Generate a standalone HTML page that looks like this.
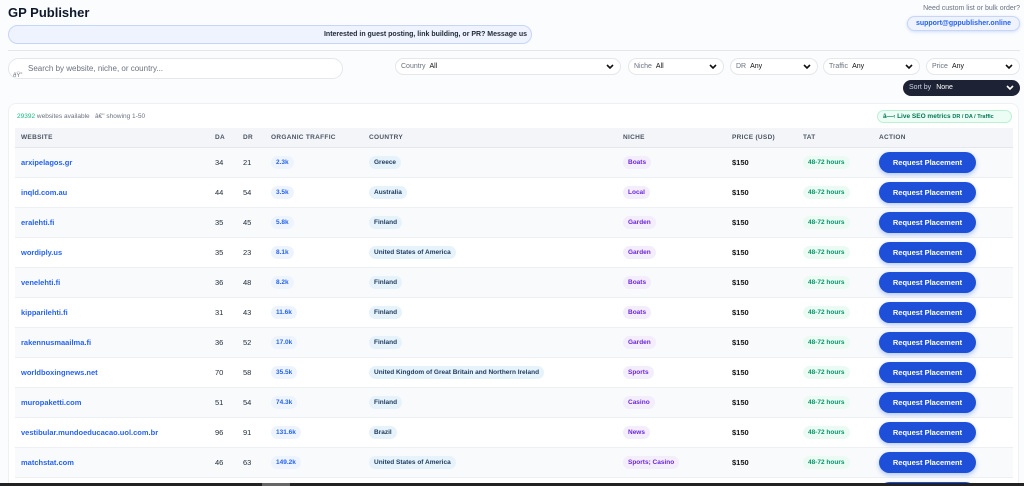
<!DOCTYPE html>
<html style="height:486px;overflow:hidden"><head><meta charset="utf-8"><style>
*{box-sizing:border-box;margin:0;padding:0}
body{width:1024px;height:486px;overflow:hidden;background:#fbfcfe;font-family:"Liberation Sans",sans-serif;position:relative;color:#111827}
.abs{position:absolute}
h1{position:absolute;left:8px;top:5px;font-size:13px;font-weight:bold;color:#0f172a}
.banner{left:8px;top:25px;width:524px;height:19px;border:1px solid #c7d6f7;background:#eef3fd;border-radius:10px;font-size:7px;font-weight:bold;text-align:right;padding-right:4px;line-height:18px;color:#1f2937}
.hr{left:8px;top:50px;width:1012px;height:1px;background:#e5e7eb}
.need{right:4px;top:5px;font-size:7px;color:#6b7280}
.sup{left:907px;top:16px;width:113px;height:15px;border:1px solid #c7d6f7;background:#eef3fd;border-radius:8px;font-size:7px;font-weight:bold;color:#2563eb;text-align:center;line-height:13px;box-shadow:0 1px 3px rgba(37,99,235,.2)}
.search{left:8px;top:58px;width:335px;height:21px;border:1px solid #e5e7eb;border-radius:11px;background:#fff;font-size:8px;color:#6b7280;padding-left:19px;line-height:20px}
.sel{top:58px;height:17px;border:1px solid #e5e7eb;border-radius:9px;background:#fff;font-size:7px;line-height:15px;padding-left:5px;color:#111}
.sel .l{color:#6b7280;margin-right:4px}
.sel svg{position:absolute;right:6px;top:5px}
.sort{left:903px;top:80px;width:117px;height:16px;background:#1e2235;border-radius:8px;color:#fff;font-size:7px;line-height:16px;padding-left:6px}
.sort svg{position:absolute;right:6px;top:5px}
.card{left:8px;top:103px;width:1011px;height:400px;background:#fff;border:1px solid #eef0f4;border-radius:8px}
.count{left:17px;top:113px;font-size:6.5px;color:#6b7280}
.live{left:877px;top:110px;width:135px;height:13px;border:1px solid #bbf0d5;background:#ecfdf5;border-radius:7px;font-size:6.5px;font-weight:bold;color:#047857;line-height:11px;padding-left:5px}
table{position:absolute;left:15px;top:128px;width:998px;border-collapse:collapse;font-size:7.5px}
th{height:19px;background:#f3f5f8;text-align:left;color:#4b5563;font-size:6.5px;letter-spacing:.3px;padding:0;border-bottom:1px solid #e5e7eb}
td{height:30px;padding:0;border-bottom:1px solid #edf0f3;color:#1f2937;vertical-align:middle}
tr:nth-child(even) td{background:#f8fafc}
.w{color:#2563eb;font-weight:bold;padding-left:6px}
.p{display:inline-block;padding:0 5px;height:13px;line-height:13px;border-radius:7px;font-weight:bold;font-size:6.5px;vertical-align:middle}
.t{background:#eef4fe;color:#2563eb}
.c{background:#e6f3fa;color:#1e3a5f}
.n{background:#f3edfc;color:#6d28d9}
.h{background:#ecfaf4;color:#059669}
.b{display:inline-block;width:97px;height:21px;border-radius:11px;background:#1d4fd8;color:#fff;font-weight:bold;text-align:center;line-height:21px;font-size:7.5px;box-shadow:0 2px 5px rgba(37,99,235,.35);vertical-align:middle}
.pr{font-weight:bold;color:#111}
.sb{left:0;top:483px;width:1024px;height:3px;background:#222;z-index:5}
</style></head><body>
<h1>GP Publisher</h1>
<div class="abs banner">Interested in guest posting, link building, or PR? Message us</div>
<div class="abs need">Need custom list or bulk order?</div>
<div class="abs sup">support@gppublisher.online</div>
<div class="abs hr"></div>
<div class="abs search">Search by website, niche, or country...</div>
<div class="abs" style="left:13px;top:73px;font-size:6px;color:#6b7280">ðŸ”</div>
<div class="abs sel" style="left:395px;width:226px"><span class="l">Country</span>All<svg width="8" height="6" viewBox="0 0 8 6"><path d="M1 1l3 3 3-3" stroke="#111" stroke-width="1.6" fill="none"/></svg></div>
<div class="abs sel" style="left:628px;width:96px"><span class="l">Niche</span>All<svg width="8" height="6" viewBox="0 0 8 6"><path d="M1 1l3 3 3-3" stroke="#111" stroke-width="1.6" fill="none"/></svg></div>
<div class="abs sel" style="left:730px;width:88px"><span class="l">DR</span>Any<svg width="8" height="6" viewBox="0 0 8 6"><path d="M1 1l3 3 3-3" stroke="#111" stroke-width="1.6" fill="none"/></svg></div>
<div class="abs sel" style="left:823px;width:97px"><span class="l">Traffic</span>Any<svg width="8" height="6" viewBox="0 0 8 6"><path d="M1 1l3 3 3-3" stroke="#111" stroke-width="1.6" fill="none"/></svg></div>
<div class="abs sel" style="left:926px;width:94px"><span class="l">Price</span>Any<svg width="8" height="6" viewBox="0 0 8 6"><path d="M1 1l3 3 3-3" stroke="#111" stroke-width="1.6" fill="none"/></svg></div>
<div class="abs sort"><span style="color:#cbd5e1;margin-right:5px">Sort by</span>None<svg width="8" height="6" viewBox="0 0 8 6"><path d="M1 1l3 3 3-3" stroke="#fff" stroke-width="1.6" fill="none"/></svg></div>
<div class="abs card"></div>
<div class="abs count"><b style="color:#10b981;font-weight:normal">29392</b> websites available &nbsp; â€" showing 1-50</div>
<div class="abs live">â—‹ Live SEO metrics <span style="font-size:5.5px">DR / DA / Traffic</span></div>
<table>
<colgroup><col style="width:200px"><col style="width:28px"><col style="width:28px"><col style="width:98px"><col style="width:254px"><col style="width:109px"><col style="width:71px"><col style="width:76px"><col></colgroup>
<tr><th style="padding-left:6px">WEBSITE</th><th>DA</th><th>DR</th><th>ORGANIC TRAFFIC</th><th>COUNTRY</th><th>NICHE</th><th>PRICE (USD)</th><th>TAT</th><th>ACTION</th></tr>
<tr><td class="w">arxipelagos.gr</td><td>34</td><td>21</td><td><span class="p t">2.3k</span></td><td><span class="p c">Greece</span></td><td><span class="p n">Boats</span></td><td class="pr">$150</td><td><span class="p h">48-72 hours</span></td><td><span class="b">Request Placement</span></td></tr>
<tr><td class="w">inqld.com.au</td><td>44</td><td>54</td><td><span class="p t">3.5k</span></td><td><span class="p c">Australia</span></td><td><span class="p n">Local</span></td><td class="pr">$150</td><td><span class="p h">48-72 hours</span></td><td><span class="b">Request Placement</span></td></tr>
<tr><td class="w">eralehti.fi</td><td>35</td><td>45</td><td><span class="p t">5.8k</span></td><td><span class="p c">Finland</span></td><td><span class="p n">Garden</span></td><td class="pr">$150</td><td><span class="p h">48-72 hours</span></td><td><span class="b">Request Placement</span></td></tr>
<tr><td class="w">wordiply.us</td><td>35</td><td>23</td><td><span class="p t">8.1k</span></td><td><span class="p c">United States of America</span></td><td><span class="p n">Garden</span></td><td class="pr">$150</td><td><span class="p h">48-72 hours</span></td><td><span class="b">Request Placement</span></td></tr>
<tr><td class="w">venelehti.fi</td><td>36</td><td>48</td><td><span class="p t">8.2k</span></td><td><span class="p c">Finland</span></td><td><span class="p n">Boats</span></td><td class="pr">$150</td><td><span class="p h">48-72 hours</span></td><td><span class="b">Request Placement</span></td></tr>
<tr><td class="w">kipparilehti.fi</td><td>31</td><td>43</td><td><span class="p t">11.6k</span></td><td><span class="p c">Finland</span></td><td><span class="p n">Boats</span></td><td class="pr">$150</td><td><span class="p h">48-72 hours</span></td><td><span class="b">Request Placement</span></td></tr>
<tr><td class="w">rakennusmaailma.fi</td><td>36</td><td>52</td><td><span class="p t">17.0k</span></td><td><span class="p c">Finland</span></td><td><span class="p n">Garden</span></td><td class="pr">$150</td><td><span class="p h">48-72 hours</span></td><td><span class="b">Request Placement</span></td></tr>
<tr><td class="w">worldboxingnews.net</td><td>70</td><td>58</td><td><span class="p t">35.5k</span></td><td><span class="p c">United Kingdom of Great Britain and Northern Ireland</span></td><td><span class="p n">Sports</span></td><td class="pr">$150</td><td><span class="p h">48-72 hours</span></td><td><span class="b">Request Placement</span></td></tr>
<tr><td class="w">muropaketti.com</td><td>51</td><td>54</td><td><span class="p t">74.3k</span></td><td><span class="p c">Finland</span></td><td><span class="p n">Casino</span></td><td class="pr">$150</td><td><span class="p h">48-72 hours</span></td><td><span class="b">Request Placement</span></td></tr>
<tr><td class="w">vestibular.mundoeducacao.uol.com.br</td><td>96</td><td>91</td><td><span class="p t">131.6k</span></td><td><span class="p c">Brazil</span></td><td><span class="p n">News</span></td><td class="pr">$150</td><td><span class="p h">48-72 hours</span></td><td><span class="b">Request Placement</span></td></tr>
<tr><td class="w">matchstat.com</td><td>46</td><td>63</td><td><span class="p t">149.2k</span></td><td><span class="p c">United States of America</span></td><td><span class="p n">Sports; Casino</span></td><td class="pr">$150</td><td><span class="p h">48-72 hours</span></td><td><span class="b">Request Placement</span></td></tr>
<tr><td class="w"></td><td></td><td></td><td></td><td></td><td></td><td></td><td></td><td><span class="b"></span></td></tr>
</table>
<div class="abs sb"></div>
<div class="abs" style="left:262px;top:483px;width:28px;height:3px;background:#666;z-index:6"></div>
</body></html>
